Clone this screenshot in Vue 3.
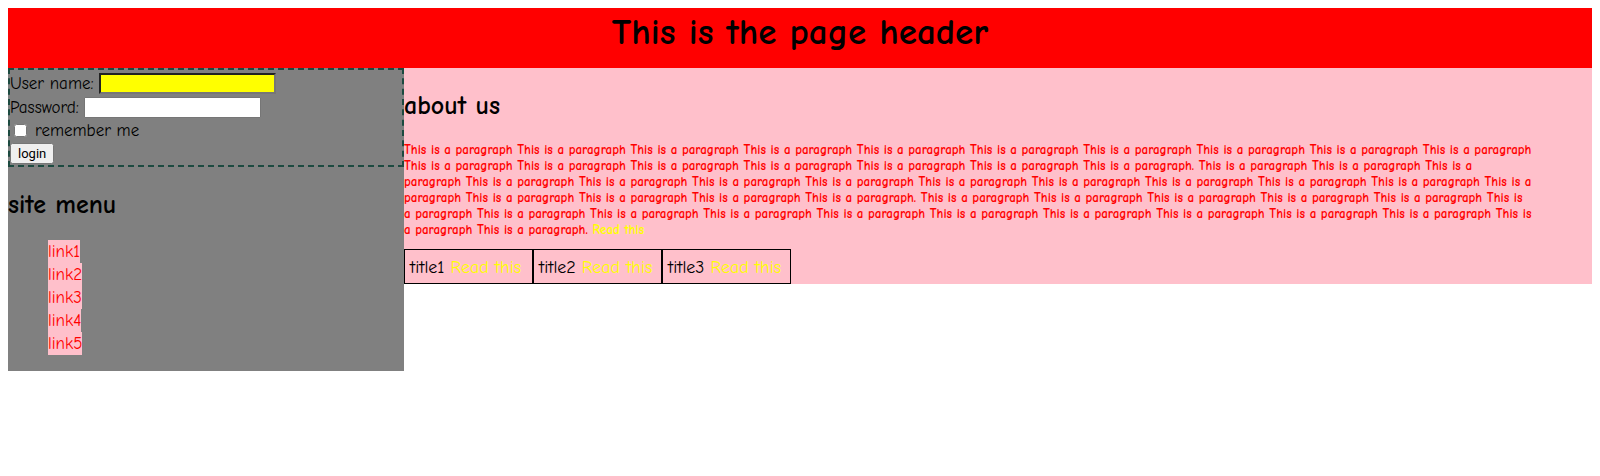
<script setup>
const phrase = (count) => Array(count).fill('This is a paragraph').join(' ')
const lines = [
  phrase(10),
  `${phrase(7)}. ${phrase(2)} This is a`,
  `paragraph ${phrase(9)} This is a`,
  `paragraph ${phrase(4)}. ${phrase(5)} This is`,
  `a paragraph ${phrase(9)} This is`,
  `a paragraph ${phrase(1)}.`,
]
const links = ['link1', 'link2', 'link3', 'link4', 'link5']
const titles = ['title1', 'title2', 'title3']
</script>

<template>
  <div class="page">
    <header class="banner"><h1>This is the page header</h1></header>
    <div class="columns">
      <aside class="side">
        <form class="login" @submit.prevent>
          <div class="row">
            <label for="user">User name:</label>
            <input id="user" class="field user" type="text" />
          </div>
          <div class="row">
            <label for="pass">Password:</label>
            <input id="pass" class="field" type="password" />
          </div>
          <div class="row short">
            <input id="remember" class="tick" type="checkbox" />
            <label for="remember">remember me</label>
          </div>
          <div class="row short"><button type="submit">login</button></div>
        </form>
        <h2>site menu</h2>
        <ul class="menu">
          <li v-for="link in links" :key="link"><a href="#">{{ link }}</a></li>
        </ul>
      </aside>
      <main class="main">
        <h2>about us</h2>
        <p class="text">
          <template v-for="(line, i) in lines" :key="i">{{ line }}<br v-if="i < lines.length - 1" /></template>
          {{ ' ' }}<a href="#">Read this</a>
        </p>
        <div class="titles">
          <div v-for="title in titles" :key="title" class="title">{{ title }} <a href="#">Read this</a></div>
        </div>
      </main>
    </div>
  </div>
</template>

<style scoped>
.page {
  margin: 8px;
  font-family: "Comic Neue", "Open Sans", sans-serif;
  font-size: 17px;
  line-height: 23px;
  color: #000;
}
.banner {
  height: 60px;
  background: red;
  text-align: center;
}
h1 {
  margin: 0;
  font-size: 37px;
  line-height: 48px;
}
h2 {
  margin: 20px 0 16px;
  font-size: 26px;
  line-height: 37px;
}
.columns {
  display: grid;
  grid-template-columns: 1fr 3fr;
  align-items: start;
}
.side {
  display: flow-root;
  background: gray;
}
.login {
  padding-top: 1px;
  border: 2px dashed #1c4a40;
}
.row {
  display: flex;
  align-items: center;
  gap: 5px;
  height: 24px;
}
.row.short {
  height: 23px;
}
.field {
  box-sizing: border-box;
  width: 177px;
  height: 21px;
}
.user {
  border: 2px inset #767676;
  background: yellow;
}
.tick {
  margin: 3px 3px 3px 4px;
}
button {
  font: 13px Roboto, "Liberation Sans", sans-serif;
}
.menu {
  margin: 0 0 16px;
  padding: 0 0 0 40px;
  list-style: none;
}
.menu a {
  display: inline-block;
  background: pink;
  color: red;
  vertical-align: top;
}
a {
  text-decoration: none;
}
.main {
  display: flow-root;
  background: pink;
}
.text {
  margin: 0;
  padding: 1px 0 11px;
  font-size: 13px;
  font-weight: bold;
  line-height: 16px;
  color: red;
  white-space: nowrap;
}
.text a,
.title a {
  color: yellow;
}
.titles {
  display: flex;
}
.title {
  box-sizing: border-box;
  width: 129px;
  padding: 6px 5px 4px;
  border: 1px solid #000;
  font-size: 18px;
  white-space: nowrap;
}
</style>
